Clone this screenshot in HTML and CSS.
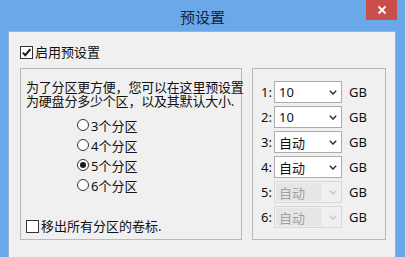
FILE: index.html
```html
<!DOCTYPE html>
<html lang="zh-CN">
<head>
<meta charset="utf-8">
<title>预设置</title>
<link rel="stylesheet" href="styles.css">
</head>
<body>
<div class="window">
  <div class="titlebar">预设置</div>
  <div class="close">
    <svg width="10" height="10" viewBox="0 0 10 10"><path d="M1.5 1.5 L8.5 8.5 M8.5 1.5 L1.5 8.5" stroke="#fff" stroke-width="1.8" fill="none"/></svg>
  </div>
  <div class="client">
    <label class="check-row">
      <span class="checkbox checked">
        <svg width="11" height="11" viewBox="0 0 11 11"><path d="M1.8 5.6 L4.3 8.2 L9.4 2.2" stroke="#1a1a1a" stroke-width="2" fill="none"/></svg>
      </span>
      <span class="label">启用预设置</span>
    </label>
    <div class="groups">
      <div class="group group-left">
        <p class="desc"><span class="line">为了分区更方便，您可以在这里预设置</span><span class="line">为硬盘分多少个区，以及其默认大小.</span></p>
        <div class="radios">
          <div class="radio-row"><span class="radio"></span><span class="label">3个分区</span></div>
          <div class="radio-row"><span class="radio"></span><span class="label">4个分区</span></div>
          <div class="radio-row"><span class="radio selected"><span class="dot"></span></span><span class="label">5个分区</span></div>
          <div class="radio-row"><span class="radio"></span><span class="label">6个分区</span></div>
        </div>
        <label class="check-row bottom-check">
          <span class="checkbox"></span>
          <span class="label">移出所有分区的卷标.</span>
        </label>
      </div>
      <div class="group group-right">
        <div class="size-row"><span class="num">1:</span><span class="select"><span class="val">10</span><svg class="chev" width="8" height="5" viewBox="0 0 8 5"><path d="M0.8 0.8 L4 4 L7.2 0.8" stroke="#333" stroke-width="1.5" fill="none"/></svg></span><span class="unit">GB</span></div>
        <div class="size-row"><span class="num">2:</span><span class="select"><span class="val">10</span><svg class="chev" width="8" height="5" viewBox="0 0 8 5"><path d="M0.8 0.8 L4 4 L7.2 0.8" stroke="#333" stroke-width="1.5" fill="none"/></svg></span><span class="unit">GB</span></div>
        <div class="size-row"><span class="num">3:</span><span class="select"><span class="val">自动</span><svg class="chev" width="8" height="5" viewBox="0 0 8 5"><path d="M0.8 0.8 L4 4 L7.2 0.8" stroke="#333" stroke-width="1.5" fill="none"/></svg></span><span class="unit">GB</span></div>
        <div class="size-row"><span class="num">4:</span><span class="select"><span class="val">自动</span><svg class="chev" width="8" height="5" viewBox="0 0 8 5"><path d="M0.8 0.8 L4 4 L7.2 0.8" stroke="#333" stroke-width="1.5" fill="none"/></svg></span><span class="unit">GB</span></div>
        <div class="size-row"><span class="num">5:</span><span class="select disabled"><span class="val">自动</span><svg class="chev" width="8" height="5" viewBox="0 0 8 5"><path d="M0.8 0.8 L4 4 L7.2 0.8" stroke="#c8c8c8" stroke-width="1.5" fill="none"/></svg></span><span class="unit">GB</span></div>
        <div class="size-row"><span class="num">6:</span><span class="select disabled"><span class="val">自动</span><svg class="chev" width="8" height="5" viewBox="0 0 8 5"><path d="M0.8 0.8 L4 4 L7.2 0.8" stroke="#c8c8c8" stroke-width="1.5" fill="none"/></svg></span><span class="unit">GB</span></div>
      </div>
    </div>
  </div>
</div>
</body>
</html>
```
FILE: styles.css
```css
* { box-sizing: border-box; }
html, body { margin: 0; padding: 0; }
body {
  font-family: "Noto Sans", "Noto Sans CJK SC", sans-serif;
  font-size: 13px;
  color: #111;
}
.window {
  width: 405px;
  height: 257px;
  background: #6aa8ea;
  position: relative;
  overflow: hidden;
  display: flex;
  flex-direction: column;
}
.titlebar {
  height: 31px;
  flex: none;
  display: flex;
  align-items: center;
  justify-content: center;
  font-family: "Noto Sans CJK SC", sans-serif;
  font-size: 15px;
  color: #16243a;
  padding-top: 1px;
}
.close {
  position: absolute;
  top: 0;
  right: 8px;
  width: 31px;
  height: 20px;
  background: #c84f4a;
  display: flex;
  align-items: center;
  justify-content: center;
}
.client {
  flex: 1;
  margin: 0 9px 0 8px;
  background: #f0f0f0;
  border: 1px solid #8fb6df;
  border-bottom: none;
  padding: 13px 0 0 11px;
}
.check-row {
  display: flex;
  align-items: center;
  height: 14px;
  line-height: 14px;
}
.checkbox {
  width: 13px;
  height: 13px;
  border: 1px solid #333;
  background: #fff;
  display: flex;
  align-items: center;
  justify-content: center;
  flex: none;
}
.check-row .label {
  margin-left: 2px;
  font-family: "Noto Sans CJK SC", sans-serif;
}
.groups {
  display: flex;
  gap: 10px;
  margin-top: 9px;
}
.group {
  height: 172px;
  border: 1px solid #b9b9b9;
}
.group-left {
  width: 222px;
  padding: 11px 0 6px 5px;
  display: flex;
  flex-direction: column;
}
.desc {
  margin: 0;
  font-family: "Noto Sans CJK SC", sans-serif;
  white-space: nowrap;
  letter-spacing: -0.2px;
  display: flex;
  flex-direction: column;
}
.desc .line {
  display: block;
  height: 14px;
  line-height: 14px;
}
.radios {
  margin-top: 7px;
  padding-left: 51px;
  display: flex;
  flex-direction: column;
}
.radio-row {
  height: 20px;
  display: flex;
  align-items: center;
}
.radio {
  width: 12px;
  height: 12px;
  border: 1px solid #333;
  border-radius: 50%;
  background: #fff;
  display: flex;
  align-items: center;
  justify-content: center;
  flex: none;
}
.dot {
  width: 6px;
  height: 6px;
  border-radius: 50%;
  background: #1a1a1a;
}
.radio-row .label {
  margin-left: 2px;
}
.bottom-check {
  margin-top: auto;
}
.group-right {
  width: 134px;
  padding: 12px 0 0 8px;
  display: flex;
  flex-direction: column;
  gap: 3px;
}
.size-row {
  height: 22px;
  display: flex;
  align-items: center;
}
.num {
  width: 13px;
  flex: none;
}
.select {
  width: 68px;
  height: 22px;
  border: 1px solid #acacac;
  background: #fff;
  display: flex;
  align-items: center;
  justify-content: space-between;
  padding: 0 4px 0 4px;
  flex: none;
}
.select .val {
  font-family: "Noto Sans", "Noto Sans CJK SC", sans-serif;
}
.select.disabled {
  background: #f0f0f0;
  border-color: #d9d9d9;
  padding: 1px 4px 1px 1px;
}
.select.disabled .val {
  background: #e6e6e6;
  color: #a0a0a0;
  align-self: stretch;
  width: 46px;
  display: flex;
  align-items: center;
  padding-left: 3px;
}
.unit {
  margin-left: 7px;
}
```
